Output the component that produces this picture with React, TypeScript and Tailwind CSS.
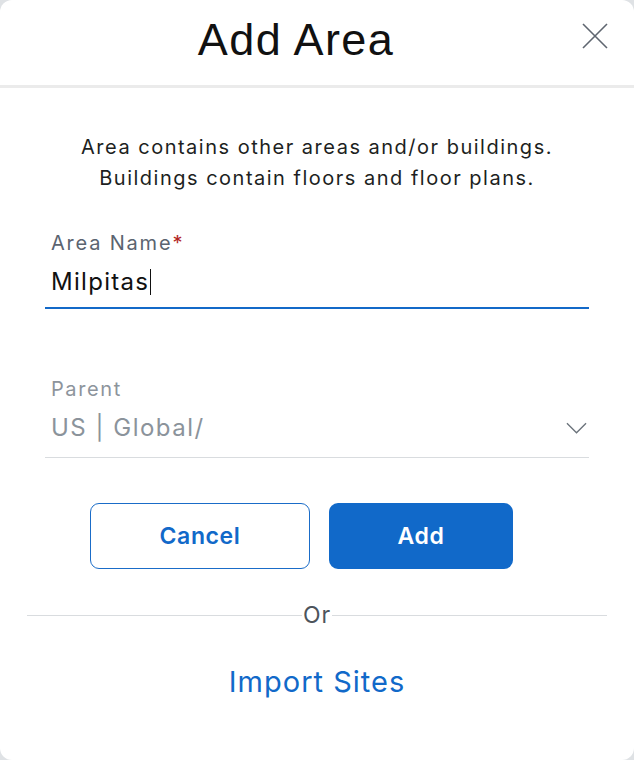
export default function App() {
  return (
    <div className="w-[634px] h-[760px] bg-[#dfe2e5]" style={{ fontFamily: 'Inter, "Noto Sans", sans-serif' }}>
      <div className="w-full h-full bg-white rounded-[12px] flex flex-col overflow-hidden">
        {/* Header */}
        <div className="relative h-[88px] flex items-center justify-center pr-[42px] border-b-[3px] border-[#ebebeb]">
          <h1
            className="text-[45px] leading-[52px] text-[#111] tracking-[1.4px] pb-[6px]"
            style={{ fontFamily: '"Liberation Sans", Arial, sans-serif' }}
          >
            Add Area
          </h1>
          <button className="absolute right-[26px] top-[23px] w-[26px] h-[26px] text-[#5f6670]">
            <svg viewBox="0 0 26 26" className="w-full h-full" fill="none" stroke="currentColor" strokeWidth="1.6">
              <path d="M1 1 L25 25 M25 1 L1 25" />
            </svg>
          </button>
        </div>

        <p className="mt-[44px] text-center text-[20px] leading-[31px] text-[#1d1f22] tracking-[1.5px]">
          Area contains other areas and/or buildings.
          <br />
          Buildings contain floors and floor plans.
        </p>

        {/* Area Name */}
        <div className="mx-[45px] mt-[36px]">
          <label className="block pl-[6px] text-[20px] text-[#5b6470] tracking-[1.8px] leading-[26px]">
            Area Name<span className="text-[#b3261e]">*</span>
          </label>
          <div className="pl-[6px] mt-[11px] h-[30px] flex items-center text-[24px] text-[#111] tracking-[1.3px]">
            Milpitas<span className="inline-block w-px h-[26px] bg-[#111] ml-[1px]" />
          </div>
          <div className="mt-[10px] h-[2px] bg-[#1369c8]" />
        </div>

        {/* Parent */}
        <div className="mx-[45px] mt-[67px]">
          <label className="block pl-[6px] text-[20px] text-[#8d949c] tracking-[1.6px] leading-[26px]">Parent</label>
          <div className="pl-[6px] mt-[11px] h-[30px] flex items-center justify-between text-[24px] text-[#8b939b] tracking-[1.5px]">
            <span>US | Global/</span>
            <svg viewBox="0 0 22 12" className="w-[21px] h-[12px] mr-[2px]" fill="none" stroke="#6b737b" strokeWidth="1.4">
              <path d="M1 1 L11 11 L21 1" />
            </svg>
          </div>
          <div className="mt-[14px] h-px bg-[#d9dcdf]" />
        </div>

        {/* Buttons */}
        <div className="mt-[45px] flex justify-center gap-[19px] pr-[31px]">
          <button className="w-[220px] h-[66px] rounded-[9px] border border-[#1a6cc8] text-[#1169c9] text-[23px] font-semibold tracking-[0.6px]">
            Cancel
          </button>
          <button className="w-[184px] h-[66px] rounded-[9px] bg-[#1169c9] text-white text-[23px] font-semibold tracking-[0.6px]">
            Add
          </button>
        </div>

        {/* Or divider */}
        <div className="mt-[32px] mx-[27px] flex items-center">
          <div className="flex-1 h-px bg-[#d9dcdf]" />
          <span className="px-[1px] text-[23px] text-[#4d545c] leading-[28px] tracking-[1px]">Or</span>
          <div className="flex-1 h-px bg-[#d9dcdf]" />
        </div>

        <div className="mt-[31px] text-center">
          <a className="text-[29px] text-[#1169c9] tracking-[1px]">Import Sites</a>
        </div>
      </div>
    </div>
  )
}
